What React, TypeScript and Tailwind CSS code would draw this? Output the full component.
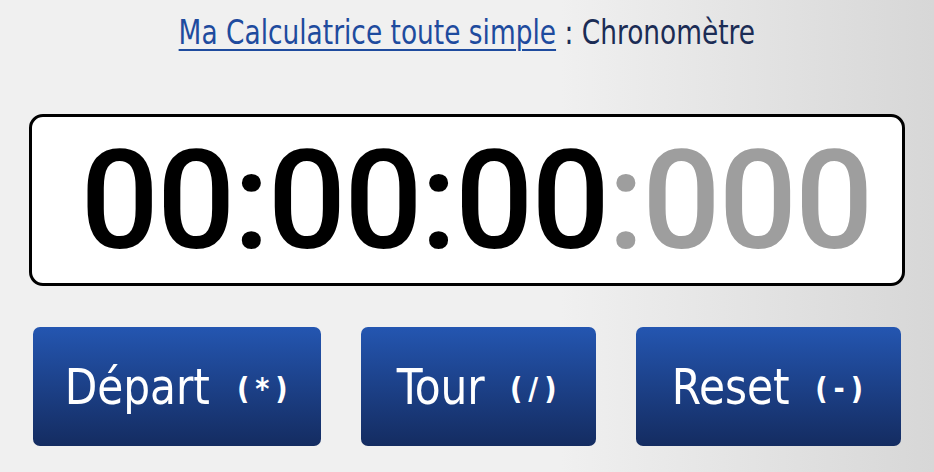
import React from "react";

const font = { fontFamily: '"DejaVu Sans Condensed", "Roboto", sans-serif' };

function KeyButton({ label, hint, width }: { label: string; hint: string; width: string }) {
  return (
    <button
      className={`${width} h-[119px] rounded-[7px] bg-gradient-to-b from-[#2456b1] to-[#142c61] text-white flex items-center justify-center gap-[22px]`}
    >
      <span className="inline-block text-[50px] leading-none scale-x-[0.94]">{label}</span>
      <span className="text-[30px] font-bold leading-none tracking-[6px] pt-[4px]">{hint}</span>
    </button>
  );
}

export default function App() {
  return (
    <div
      className="w-[934px] h-[472px] overflow-hidden bg-gradient-to-r from-[#f0f0f0] from-60% to-[#d7d7d7]"
      style={font}
    >
      <div className="w-[876px] mx-auto flex flex-col">
        <h1 className="pt-[14px] text-center text-[33px] leading-[38px] text-[#1b2c55]">
          <span className="inline-block scale-x-[0.89] whitespace-nowrap">
            <a href="#" className="text-[#1e4b9e] underline underline-offset-[5px] decoration-2">
              Ma Calculatrice toute simple
            </a>{" "}
            : Chronomètre
          </span>
        </h1>

        <div className="mt-[62px] h-[172px] bg-white border-[3px] border-black rounded-[14px] flex items-center justify-center">
          <div
            className="text-[138px] leading-none font-medium tracking-[-2px] pl-[18px] pt-[2px]"
            style={{ fontFamily: "Roboto, sans-serif" }}
          >
            <span className="text-black">00:00:00</span>
            <span className="text-[#9e9e9e]">:000</span>
          </div>
        </div>

        <div className="mt-[41px] px-[4px] flex justify-between">
          <KeyButton label="Départ" hint="(*)" width="w-[288px]" />
          <KeyButton label="Tour" hint="(/)" width="w-[235px]" />
          <KeyButton label="Reset" hint="(-)" width="w-[265px]" />
        </div>
      </div>
    </div>
  );
}
